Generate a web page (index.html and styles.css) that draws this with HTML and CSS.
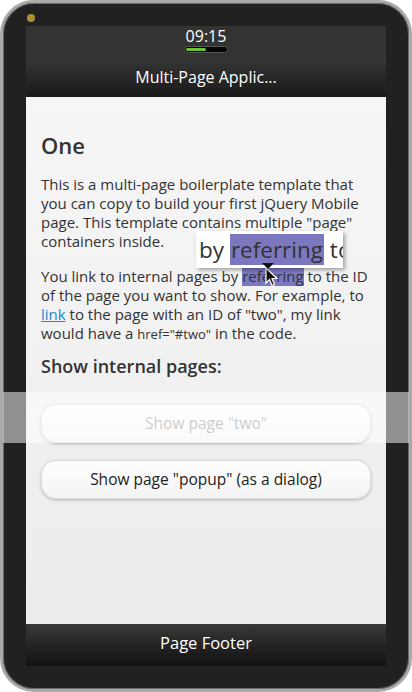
FILE: index.html
```html
<!DOCTYPE html>
<html>
<head>
	<title>Multi-Page Application</title>
	<link rel="stylesheet" href="styles.css">
</head>
<body>
	<div class="device">
		<span class="led"></span>
		<div class="screen">
			<div class="status">
				<span class="time">09:15</span>
				<span class="battery"><span class="charge"></span></span>
			</div>
			<div class="header">Multi-Page Applic...</div>
			<div class="content">
				<h2 class="title">One</h2>
				<p>This is a multi-page boilerplate template that you can copy to build your first jQuery Mobile page. This template contains multiple "page" containers inside.</p>
				<p class="second">You link to internal pages by <span class="sel">referring<span class="cursor"><svg width="14" height="20" viewBox="0 0 14 20"><path d="M1 1 L1 16 L4.5 12.5 L7 18.5 L9.5 17.5 L7 11.5 L12 11.5 Z" fill="#111" stroke="#fff" stroke-width="1.2"/></svg></span></span> to the ID of the page you want to show. For example, to <a href="#two">link</a> to the page with an ID of "two", my link would have a <code>href="#two"</code> in the code.</p>
				<div class="magnifier">by <span class="sel">referring</span> to</div>
				<h3 class="sub">Show internal pages:</h3>
				<a class="btn dim" href="#two">Show page "two"</a>
				<a class="btn" href="#popup">Show page "popup" (as a dialog)</a>
			</div>
			<div class="footer">Page Footer</div>
		</div>
		<div class="band">Protect more of your memories for less!</div>
	</div>
</body>
</html>
```
FILE: styles.css
```css
body
{
	margin: 0;
	background: #fff;
	font-family: "Open Sans", "Noto Sans", sans-serif;
}
.device
{
	position: relative;
	box-sizing: border-box;
	width: 412px;
	height: 692px;
	padding: 23px;
	background: #212121;
	border: 3px solid #a9a9a9;
	border-radius: 34px;
	box-shadow: inset 0 0 0 1px #6a6a6a;
	overflow: hidden;
}
.led
{
	position: absolute;
	left: 24px;
	top: 11px;
	width: 8px;
	height: 8px;
	border-radius: 50%;
	background: #b08f3a;
}
.screen
{
	display: flex;
	flex-direction: column;
	width: 360px;
	height: 640px;
}
.status
{
	height: 31px;
	background: #333331;
	display: flex;
	flex-direction: column;
	align-items: center;
}
.time
{
	color: #fff;
	font-size: 16px;
	line-height: 18px;
	margin-top: 1px;
}
.battery
{
	width: 40px;
	height: 5px;
	margin-top: 1px;
	background: #050505;
	border: 1px solid #555;
	border-radius: 4px;
	display: flex;
	padding: 0 1px;
	align-items: center;
}
.charge
{
	width: 20px;
	height: 3px;
	border-radius: 2px;
	background: #6cc230;
}
.header
{
	height: 40px;
	line-height: 40px;
	text-align: center;
	color: #fff;
	font-size: 16px;
	background: linear-gradient(#363636, #1a1a1a);
}
.content
{
	flex: 1;
	padding: 0 15px;
	background: linear-gradient(#f6f6f6, #ececec);
	color: #333;
	position: relative;
}
.title
{
	margin: 34px 0 0;
	font-size: 22px;
	font-weight: 600;
	line-height: 28px;
}
p
{
	margin: 16px 0 0;
	font-size: 15px;
	line-height: 19px;
}
.second
{
	margin-top: 16px;
}
a
{
	color: #2489ce;
}
code
{
	font-family: "Open Sans", sans-serif;
	font-size: 13px;
}
.sel
{
	background: #7b78bf;
	position: relative;
}
.cursor
{
	position: absolute;
	left: 23px;
	top: 1px;
}
.magnifier
{
	position: absolute;
	left: 170px;
	top: 134px;
	width: 147px;
	height: 37px;
	padding-left: 3px;
	box-sizing: border-box;
	background: #fff;
	box-shadow: 2px 2px 4px rgba(0,0,0,0.35);
	font-size: 22.5px;
	line-height: 37px;
	white-space: nowrap;
	overflow: hidden;
	color: #333;
}
.magnifier .sel
{
	padding: 0 1px;
}
.magnifier::after
{
	content: "";
	position: absolute;
	left: 66px;
	top: 32px;
	border: 6px solid transparent;
	border-top-color: #111;
	border-bottom-width: 0;
}
.sub
{
	margin: 11px 0 0;
	font-size: 18px;
	font-weight: 600;
	line-height: 22px;
}
.btn
{
	display: block;
	margin-top: 17px;
	height: 37px;
	line-height: 37px;
	text-align: center;
	text-decoration: none;
	color: #222;
	font-size: 15.5px;
	background: linear-gradient(#fff, #f3f3f3);
	border: 1px solid #ddd;
	border-radius: 15px;
	box-shadow: 0 1px 3px rgba(0,0,0,0.25);
}
.btn.dim
{
	color: #999;
	margin-top: 27px;
}
.footer
{
	height: 42px;
	line-height: 38px;
	text-align: center;
	color: #fff;
	font-size: 16.5px;
	background: linear-gradient(#383838, #111);
}
.band
{
	position: absolute;
	left: 0;
	right: 0;
	top: 389px;
	height: 51px;
	line-height: 44px;
	background: rgba(255,255,255,0.5);
	color: rgba(255,255,255,0.4);
	font-size: 16px;
	font-weight: bold;
	white-space: nowrap;
	overflow: hidden;
	padding-left: 27px;
}
```
